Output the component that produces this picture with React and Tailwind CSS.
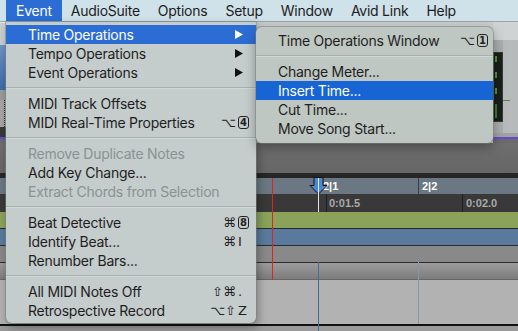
import React from "react";

const menuFont = { fontFamily: 'Inter, "Noto Sans", "DejaVu Sans", sans-serif' };

function Key({ k }) {
  if (/^[0-9]$/.test(k)) {
    return (
      <span className="inline-flex items-center justify-center w-[11px] h-[13px] border border-current rounded-[3px] text-[10px] leading-none font-semibold">
        {k}
      </span>
    );
  }
  return <span>{k}</span>;
}

function Shortcut({ mods, k, light }) {
  return (
    <span className={`flex items-center tracking-normal ${light ? "text-white" : "text-[#222]"}`}>
      <span className="text-right text-[13px]" style={{ fontFamily: '"DejaVu Sans", sans-serif' }}>{mods}</span>
      <span className="w-[14px] pl-[2px] flex items-center text-[13px]" style={{ fontFamily: '"DejaVu Sans", sans-serif' }}>
        <Key k={k} />
      </span>
    </span>
  );
}

function Arrow({ light }) {
  return (
    <svg width="8" height="9" viewBox="0 0 8 9" className="mr-[7px]">
      <path d="M0 0 L8 4.5 L0 9 Z" fill={light ? "#fff" : "#111"} />
    </svg>
  );
}

function Item({ label, arrow, sc, hi, disabled, hiColor = "bg-[#2c6dd5]", pr = "pr-[6px]" }) {
  return (
    <div
      className={`h-[19px] flex items-center justify-between pl-[22px] ${pr} text-[14px] leading-[19px] tracking-[-0.25px] ${
        hi ? `${hiColor} text-white` : disabled ? "text-[#8b9292]" : "text-[#1e1e1e]"
      }`}
    >
      <span>{label}</span>
      {arrow && <Arrow light={hi} />}
      {sc && <Shortcut mods={sc[0]} k={sc[1]} light={hi} />}
    </div>
  );
}

function Sep() {
  return (
    <div className="h-[12px] flex flex-col justify-center">
      <div className="h-[1px] bg-[#a9b0b0]" />
      <div className="h-[1px] bg-[#d2d8d8]" />
    </div>
  );
}

const rulerFont = { fontFamily: '"Liberation Sans", Arial, sans-serif' };

export default function App() {
  return (
    <div className="relative w-[518px] h-[331px] overflow-hidden bg-[#9b9b9b]" style={menuFont}>
      {/* Menu bar */}
      <div className="h-[22px] flex items-center bg-[#cfe1e9] text-[14px] tracking-[-0.25px] text-[#1c1c1c] pl-[6px] border-b border-[#9aa6ab]">
        <div className="h-full flex items-center pl-[10px] pr-[10px] bg-[#2b6dd4] text-white">Event</div>
        <div className="px-[9px]">AudioSuite</div>
        <div className="px-[9px]">Options</div>
        <div className="px-[9px]">Setup</div>
        <div className="px-[9px]">Window</div>
        <div className="px-[9px]">Avid Link</div>
        <div className="px-[9px]">Help</div>
      </div>

      {/* Background window */}
      <div className="flex flex-col">
        <div className="h-[121px] flex">
          <div className="w-[6px] flex flex-col">
            <div className="h-[1px] bg-[#e8ecec]" />
            <div className="h-[22px] bg-[#c9cece]" />
            <div className="h-[45px] bg-gradient-to-b from-[#6c93c8] to-[#3c6aa8]" />
            <div className="h-[10px] bg-[#9a9c9c]" />
            <div className="h-[27px] bg-[#a4a6a6] flex justify-end pr-[1px]">
              <div className="w-[1px] h-full border-l border-dotted border-[#333]" />
            </div>
            <div className="h-[10px] bg-[#3a3a3a]" />
            <div className="h-[2px] bg-[#6a48d0]" />
            <div className="h-[4px] bg-[#6b6b6b]" />
          </div>
          <div className="flex-1 bg-[#c9cdcd]" />
          <div className="w-[25px] flex flex-col">
            <div className="h-[18px] bg-[#cfd3d3]" />
            <div className="h-[93px] flex bg-[#a9adad]">
              <div className="w-[10px] mt-[12px] h-[70px] bg-[#1b1f1c] border border-[#2f3a30] flex flex-col items-start gap-[10px] pt-[3px] pl-[1px]">
                <div className="w-[2px] h-[6px] bg-[#4d9a2c]" />
                <div className="w-[2px] h-[6px] bg-[#4d9a2c]" />
                <div className="w-[2px] h-[6px] bg-[#4d9a2c]" />
                <div className="w-[2px] h-[14px] bg-[#3d7a24]" />
              </div>
              <div className="flex-1 bg-[#b6baba] flex flex-col">
                <div className="h-[60px]" />
                <div className="h-[1px] w-[7px] bg-[#5f8a3c]" />
              </div>
            </div>
            <div className="h-[4px] bg-[#9ea2a2]" />
            <div className="h-[2px] bg-[#6a48d0]" />
            <div className="h-[4px] bg-[#6b6b6b]" />
          </div>
        </div>
        <div className="h-[30px] bg-gradient-to-b from-[#6e6e6e] to-[#666666]" />
        <div className="h-[5px] bg-[#262626]" />
        <div className="h-[16px] bg-[#6b7782]" />
        <div className="h-[18px] bg-[#393939]" />
        <div className="h-[16px] bg-[#8ba25a]" />
        <div className="h-[1px] bg-[#2a2a2a]" />
        <div className="h-[16px] bg-[#5a7a9d]" />
        <div className="h-[1px] bg-[#2b2b2b]" />
        <div className="h-[16px] bg-[#898989]" />
        <div className="h-[1px] bg-[#2b2b2b]" />
        <div className="h-[17px] bg-gradient-to-b from-[#9c9c9c] to-[#7c7c7c] border-b border-[#666]" />
        <div className="h-[44px] bg-[#b2b2b2]" />
        <div className="h-[2px] bg-[#111]" />
        <div className="h-[5px] bg-[#9a9a9a]" />
      </div>

      {/* Overlay lines / ruler marks */}
      <div className="absolute left-[418px] top-[178px] w-[1px] h-[16px] bg-[#3a3f44]" />
      <div className="absolute left-[326px] top-[194px] w-[1px] h-[18px] bg-[#1f1f1f]" />
      <div className="absolute left-[462px] top-[194px] w-[1px] h-[18px] bg-[#1f1f1f]" />
      <div className="absolute left-[323px] top-[178px] h-[16px] flex items-center text-[11px] font-bold text-white" style={rulerFont}>
        2|1
      </div>
      <div className="absolute left-[422px] top-[178px] h-[16px] flex items-center text-[11px] font-bold text-white" style={rulerFont}>
        2|2
      </div>
      <div className="absolute left-[329px] top-[194px] h-[18px] flex items-center text-[11px] font-bold text-[#a9a9a9]" style={rulerFont}>
        0:01.5
      </div>
      <div className="absolute left-[466px] top-[194px] h-[18px] flex items-center text-[11px] font-bold text-[#a9a9a9]" style={rulerFont}>
        0:02.0
      </div>
      <div className="absolute left-[272px] top-[178px] w-[1px] h-[102px] bg-[#e0231c]" />
      <div className="absolute left-[318px] top-[262px] w-[1px] h-[69px] bg-[#3f6f9e]" />
      <div className="absolute left-[418px] top-[262px] w-[1px] h-[62px] bg-[#8797a6]" />
      <svg className="absolute left-[309px] top-[177px]" width="19" height="18" viewBox="0 0 19 18">
        <path d="M5 0.5 H14 V8.5 H18 L9.5 17 L1 8.5 H5 Z" fill="#4b8ad0" stroke="#111" strokeWidth="1" />
      </svg>
      <div className="absolute left-[318px] top-[178px] w-[1px] h-[34px] bg-[#e6e6e6]" />

      {/* Main menu */}
      <div className="absolute left-[6px] top-[22px] w-[250px] h-[301px] bg-[#c5cccc] rounded-b-[6px] pt-[3px] shadow-[0_0_0_1px_rgba(120,130,130,0.5),2px_4px_10px_rgba(0,0,0,0.35)]">
        <Item label="Time Operations" arrow hi />
        <Item label="Tempo Operations" arrow />
        <Item label="Event Operations" arrow />
        <Sep />
        <Item label="MIDI Track Offsets" />
        <Item label="MIDI Real-Time Properties" sc={["⌥", "4"]} />
        <Sep />
        <Item label="Remove Duplicate Notes" disabled />
        <Item label="Add Key Change..." />
        <Item label="Extract Chords from Selection" disabled />
        <Sep />
        <Item label="Beat Detective" sc={["⌘", "8"]} />
        <Item label="Identify Beat..." sc={["⌘", "I"]} />
        <Item label="Renumber Bars..." />
        <Sep />
        <Item label="All MIDI Notes Off" sc={["⇧⌘", "."]} />
        <Item label="Retrospective Record" sc={["⌥⇧", "Z"]} />
      </div>

      {/* Submenu */}
      <div className="absolute left-[256px] top-[27px] w-[237px] h-[116px] bg-[#bfc7c3] rounded-[6px] pt-[4px] shadow-[0_0_0_1px_rgba(120,130,128,0.5),0_4px_12px_rgba(0,0,0,0.35)]">
        <Item label="Time Operations Window" sc={["⌥", "1"]} pr="pr-[4px]" />
        <Sep />
        <Item label="Change Meter..." />
        <Item label="Insert Time..." hi hiColor="bg-[#1765d5]" />
        <Item label="Cut Time..." />
        <Item label="Move Song Start..." />
      </div>
    </div>
  );
}
